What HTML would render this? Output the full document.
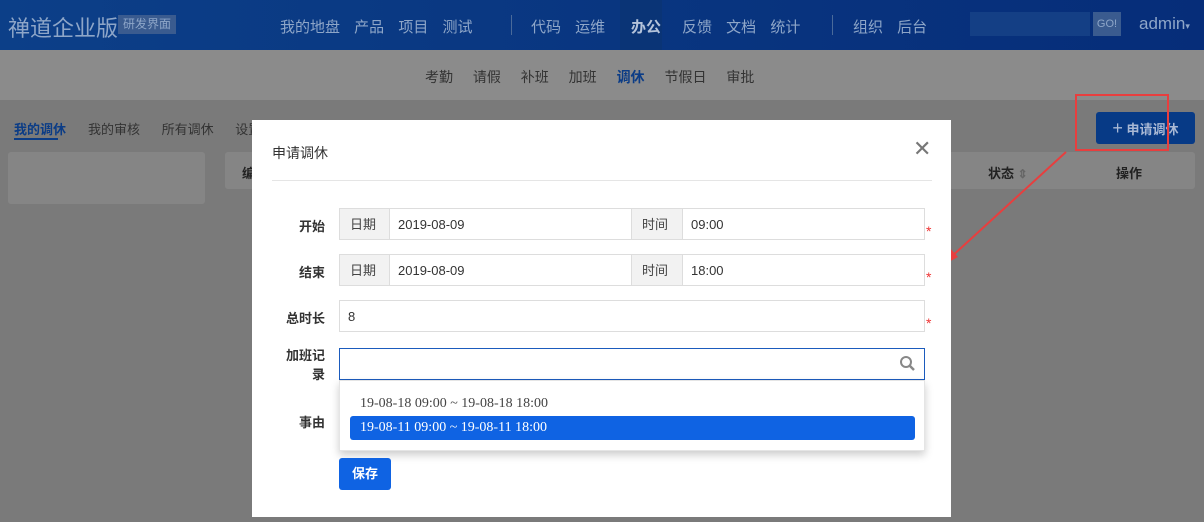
<!DOCTYPE html><html><head><meta charset="utf-8"><style>
*{box-sizing:border-box;margin:0;padding:0}
body{width:1204px;height:522px;overflow:hidden;position:relative;background:#7a7a7a;font-family:"Liberation Sans","Noto Sans CJK SC",sans-serif;font-size:13px;color:#333}
.top{position:absolute;left:0;top:0;width:1204px;height:50px;background:linear-gradient(90deg,#0c3f88,#062d79)}
.abs{position:absolute;white-space:nowrap}
.sub{position:absolute;top:50px;left:0;width:1204px;height:50px;background:#8b8b8b}
.inp{position:absolute;border:1px solid #ddd;background:#fff;height:32px;font-size:13px;line-height:32px;padding-left:8px}
.addon{position:absolute;background:#f2f2f2;border:1px solid #ddd;height:32px;line-height:32px;padding-left:10px;color:#444}
.lbl{position:absolute;font-weight:bold;font-size:13px;color:#333;text-align:right;width:60px}
.star{position:absolute;color:#e33;font-size:14px}
</style></head><body>
<div class="top"></div>
<div class="abs" style="left:8px;top:11px;font-size:22px;color:#8ea6c8">禅道企业版</div>
<div class="abs" style="left:118px;top:15px;height:19px;background:#3a5b8f;color:#8ea6c8;font-size:12px;line-height:19px;padding:0 5px">研发界面</div>
<div class="abs" style="left:280px;top:16px;font-size:15px;color:#8ea6c8;word-spacing:10px">我的地盘 产品 项目 测试</div>
<div class="abs" style="left:511px;top:15px;width:1px;height:20px;background:#4a6a9a"></div>
<div class="abs" style="left:531px;top:16px;font-size:15px;color:#8ea6c8;word-spacing:10px">代码 运维</div>
<div class="abs" style="left:620px;top:0;width:42px;height:50px;background:#0a3476"></div>
<div class="abs" style="left:631px;top:16px;font-size:15px;color:#b4c3da;font-weight:bold">办公</div>
<div class="abs" style="left:682px;top:16px;font-size:15px;color:#8ea6c8;word-spacing:10px">反馈 文档 统计</div>
<div class="abs" style="left:832px;top:15px;width:1px;height:20px;background:#4a6a9a"></div>
<div class="abs" style="left:853px;top:16px;font-size:15px;color:#8ea6c8;word-spacing:10px">组织 后台</div>
<div class="abs" style="left:970px;top:12px;width:120px;height:24px;background:#143f85"></div>
<div class="abs" style="left:1093px;top:12px;width:28px;height:24px;background:#3a5b8f;color:#8ea6c8;font-size:11px;line-height:24px;text-align:center">GO!</div>
<div class="abs" style="left:1139px;top:14px;font-size:17px;color:#8ea6c8">admin<span style="font-size:9px">▾</span></div>
<div class="sub"></div>
<div class="abs" style="left:425px;top:67px;font-size:14px;color:#333;word-spacing:16px">考勤 请假 补班 加班 <b style="color:#0b3c86">调休</b> 节假日 审批</div>
<div class="abs" style="left:14px;top:119px;font-size:13px;color:#0b3c86;font-weight:bold">我的调休</div>
<div class="abs" style="left:14px;top:138px;width:44px;height:2px;background:#0b3c86"></div>
<div class="abs" style="left:88px;top:119px;font-size:13px;color:#333;word-spacing:18px">我的审核 所有调休 设置</div>
<div class="abs" style="left:8px;top:152px;width:197px;height:52px;background:#858585;border-radius:3px"></div>
<div class="abs" style="left:225px;top:152px;width:970px;height:37px;background:#858585;border-radius:3px"></div>
<div class="abs" style="left:242px;top:163px;font-weight:bold;color:#222">编</div>
<div class="abs" style="left:988px;top:163px;font-weight:bold;color:#222">状态 <span style="color:#666;font-size:12px">⇕</span></div>
<div class="abs" style="left:1116px;top:163px;font-weight:bold;color:#222">操作</div>
<div class="abs" style="left:1096px;top:112px;width:99px;height:32px;background:#073a86;border-radius:3px;color:#a8b8d4;font-size:13px;line-height:32px;text-align:center;font-weight:bold"><span style="font-size:18px;font-weight:normal">+</span> 申请调休</div>
<div class="abs" style="left:1075px;top:94px;width:94px;height:57px;border:2px solid #e83e3e"></div>
<svg class="abs" style="left:0;top:0" width="1204" height="522"><line x1="1066" y1="152" x2="950" y2="258" stroke="#e83e3e" stroke-width="2"/><polygon points="945,264 950,248 958,257" fill="#e83e3e"/></svg>
<div class="abs" style="left:252px;top:120px;width:699px;height:397px;background:#fff"></div>
<div class="abs" style="left:272px;top:143px;font-size:14px;color:#333">申请调休</div>
<div class="abs" style="left:913px;top:136px;font-size:22px;color:#777">✕</div>
<div class="abs" style="left:272px;top:180px;width:660px;height:1px;background:#e5e5e5"></div>
<div class="lbl" style="left:265px;top:216px">开始</div>
<div class="addon" style="left:339px;top:208px;width:51px">日期</div>
<div class="inp" style="left:389px;top:208px;width:243px">2019-08-09</div>
<div class="addon" style="left:631px;top:208px;width:52px">时间</div>
<div class="inp" style="left:682px;top:208px;width:243px">09:00</div>
<div class="star" style="left:926px;top:223px">*</div>
<div class="lbl" style="left:265px;top:262px">结束</div>
<div class="addon" style="left:339px;top:254px;width:51px">日期</div>
<div class="inp" style="left:389px;top:254px;width:243px">2019-08-09</div>
<div class="addon" style="left:631px;top:254px;width:52px">时间</div>
<div class="inp" style="left:682px;top:254px;width:243px">18:00</div>
<div class="star" style="left:926px;top:269px">*</div>
<div class="lbl" style="left:265px;top:308px">总时长</div>
<div class="inp" style="left:339px;top:300px;width:586px">8</div>
<div class="star" style="left:926px;top:315px">*</div>
<div class="lbl" style="left:265px;top:346px;line-height:19px">加班记<br>录</div>
<div class="inp" style="left:339px;top:348px;width:586px;border-color:#1b5bbd"></div>
<svg class="abs" style="left:899px;top:355px" width="18" height="18"><circle cx="7" cy="7" r="5" fill="none" stroke="#888" stroke-width="2"/><line x1="11" y1="11" x2="15" y2="15" stroke="#888" stroke-width="2.5"/></svg>
<div class="lbl" style="left:265px;top:412px">事由</div>
<div class="abs" style="left:339px;top:380px;width:586px;height:71px;background:#fff;box-shadow:0 4px 8px rgba(0,0,0,.2);border:1px solid #e5e5e5"></div>
<div class="abs" style="left:360px;top:396px;font-family:'Liberation Serif',serif;font-size:14px;color:#444">19-08-18 09:00 ~ 19-08-18 18:00</div>
<div class="abs" style="left:350px;top:416px;width:565px;height:24px;background:#0f63e3;border-radius:3px;color:#fff;font-family:'Liberation Serif',serif;font-size:14px;line-height:24px;padding-left:10px">19-08-11 09:00 ~ 19-08-11 18:00</div>
<div class="abs" style="left:339px;top:458px;width:52px;height:32px;background:#0f63e3;border-radius:3px;color:#fff;font-weight:bold;line-height:32px;text-align:center">保存</div>
</body></html>
